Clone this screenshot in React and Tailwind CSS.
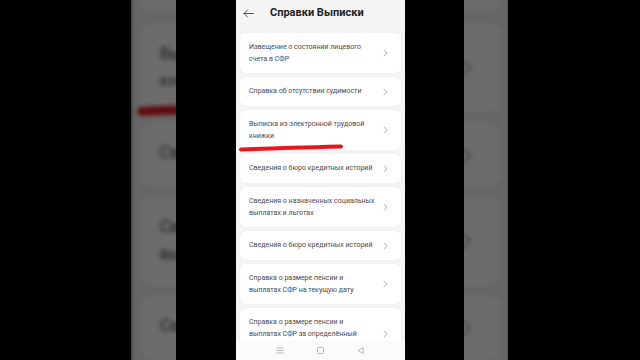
import React from 'react';

const items = [
  ["Извещение о состоянии лицевого", "счета в СФР"],
  ["Справка об отсутствии судимости"],
  ["Выписка из электронной трудовой", "книжки"],
  ["Сведения о бюро кредитных историй"],
  ["Сведения о назначенных социальных", "выплатах и льготах"],
  ["Сведения о бюро кредитных историй"],
  ["Справка о размере пенсии и", "выплатах СФР на текущую дату"],
  ["Справка о размере пенсии и", "выплатах СФР за определённый", "период"],
];

const Chevron = () => (
  <svg width="5" height="8" viewBox="0 0 5 8" className="shrink-0">
    <path d="M1 1 L4 4 L1 7" fill="none" stroke="#b4b4b4" strokeWidth="1" strokeLinecap="round" strokeLinejoin="round" />
  </svg>
);

const Card = ({ lines, marked }) => (
  <div className="relative flex min-h-[29px] shrink-0 items-center justify-between rounded-[6px] bg-white py-[7.5px] pl-[9px] pr-[13px] shadow-[0_0_2px_rgba(0,0,0,0.06)]">
    <div className="text-[7px] leading-[12.5px] text-[#4a4a4a]">
      {lines.map((l, i) => (
        <div key={i} className="whitespace-nowrap">{l}</div>
      ))}
    </div>
    <Chevron />
    {marked && (
      <svg width="106" height="8" viewBox="0 0 106 8" className="absolute left-[-2px] top-[34px]">
        <path d="M3 5.5 Q 40 4 103 2.5" fill="none" stroke="#e8161c" strokeWidth="4" strokeLinecap="round" />
      </svg>
    )}
  </div>
);

const Screen = () => (
  <div className="flex h-[360px] w-[169px] shrink-0 flex-col overflow-hidden bg-[#f4f4f4] font-['Roboto',sans-serif]">
    {/* header */}
    <div className="flex h-[26px] shrink-0 items-center gap-[16px] pl-[7px]">
      <svg width="11" height="9" viewBox="0 0 11 9">
        <path d="M10.5 4.5 H1 M4.5 1 L1 4.5 L4.5 8" fill="none" stroke="#555" strokeWidth="1" strokeLinecap="round" strokeLinejoin="round" />
      </svg>
      <span className="text-[11px] font-bold text-[#222]">Справки Выписки</span>
    </div>
    {/* list */}
    <div className="flex min-h-0 flex-1 flex-col gap-[4px] overflow-hidden px-[4px] pt-[7px]">
      {items.map((lines, i) => (
        <Card key={i} lines={lines} marked={i === 2} />
      ))}
    </div>
    {/* nav bar */}
    <div className="flex h-[19px] shrink-0 items-center justify-center gap-[33px] bg-[#fbfbfb] pr-[2px]">
      <svg width="8" height="7" viewBox="0 0 8 7">
        <path d="M0.5 1 H7.5 M0.5 3.5 H7.5 M0.5 6 H7.5" stroke="#b0b0b0" strokeWidth="0.9" />
      </svg>
      <svg width="7" height="7" viewBox="0 0 7 7">
        <rect x="0.5" y="0.5" width="6" height="6" rx="1.2" fill="none" stroke="#b0b0b0" strokeWidth="0.9" />
      </svg>
      <svg width="7" height="7" viewBox="0 0 7 7">
        <path d="M6.2 0.7 V6.3 L1 3.5 Z" fill="none" stroke="#b0b0b0" strokeWidth="0.9" strokeLinejoin="round" />
      </svg>
    </div>
  </div>
);

export default function App() {
  return (
    <div className="relative h-[360px] w-[640px] overflow-hidden bg-black">
      {/* blurred enlarged copy behind */}
      <div className="absolute inset-0 flex justify-center" aria-hidden="true">
        <div className="origin-center scale-[2.25] brightness-[0.42] blur-[1px]">
          <Screen />
        </div>
      </div>
      {/* foreground */}
      <div className="relative flex h-full">
        <div className="w-[131px] bg-black" />
        <div className="w-[45px]" />
        <div className="w-[60px] bg-black" />
        <Screen />
        <div className="w-[59px] bg-black" />
        <div className="w-[44px]" />
        <div className="flex-1 bg-black" />
      </div>
    </div>
  );
}
